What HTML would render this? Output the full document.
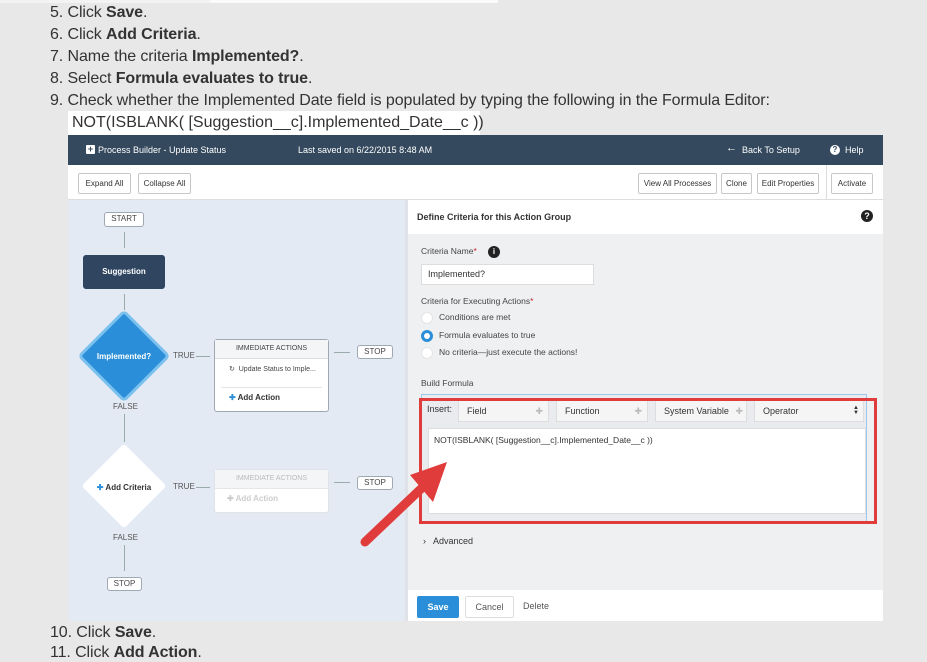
<!DOCTYPE html>
<html><head><meta charset="utf-8"><style>
*{margin:0;padding:0;box-sizing:border-box}
body{width:927px;height:657px;background:#e8e8e8;position:relative;overflow:hidden;font-family:"Liberation Sans Narrow","Liberation Sans",sans-serif;color:#333}
.a{position:absolute}
.li{position:absolute;left:50px;font-size:16px;color:#333;white-space:nowrap;letter-spacing:-0.1px}
.li b{font-weight:bold}
.s{font-family:"Liberation Sans",sans-serif}
.btn{position:absolute;top:173px;height:21px;border:1px solid #c8c8c8;border-radius:2px;background:#fff;font-size:8px;line-height:19px;text-align:center;color:#333;font-family:"Liberation Sans",sans-serif}
.box{position:absolute;border:1.5px solid #a0a8b4;border-radius:3px;background:#fff;font-size:8px;text-align:center;color:#444;font-family:"Liberation Sans",sans-serif}
.lbl{position:absolute;font-size:8px;color:#555;font-family:"Liberation Sans",sans-serif}
.vl{position:absolute;width:1px;background:#9aa}
.hl{position:absolute;height:1px;background:#9aa}
.sel{position:absolute;top:400px;height:22px;background:#f5f5f5;border:1px solid #ddd;font-size:9px;line-height:20px;padding-left:8px;color:#333}
.radio{position:absolute;left:421px;width:12px;height:12px;border-radius:50%;background:#fff;border:1px solid #e4e4e4}
</style></head><body>
<div class="a" style="left:0;top:0;width:210px;height:3px;background:#f3f3f3"></div>
<div class="a" style="left:210px;top:0;width:288px;height:3px;background:#fafafa"></div>

<div class="li" style="top:4px">5. Click <b>Save</b>.</div>
<div class="li" style="top:26px">6. Click <b>Add Criteria</b>.</div>
<div class="li" style="top:48px">7. Name the criteria <b>Implemented?</b>.</div>
<div class="li" style="top:70px">8. Select <b>Formula evaluates to true</b>.</div>
<div class="li" style="top:92px">9. Check whether the Implemented Date field is populated by typing the following in the Formula Editor:</div>
<div class="a" style="left:68px;top:111px;width:412px;height:24px;background:#fff;font-size:16px;line-height:24px;padding-left:4px;white-space:nowrap">NOT(ISBLANK( [Suggestion__c].Implemented_Date__c ))</div>

<div class="a" style="left:68px;top:135px;width:815px;height:30px;background:#34495e"></div>
<div class="a s" style="left:86px;top:145px;width:9px;height:9px;background:#fff;border-radius:1px;color:#34495e;font-size:9px;line-height:9px;text-align:center;font-weight:bold">+</div>
<div class="a s" style="left:98px;top:145px;font-size:9px;color:#fff">Process Builder - Update Status</div>
<div class="a s" style="left:298px;top:145px;font-size:9px;color:#fff">Last saved on 6/22/2015 8:48 AM</div>
<div class="a s" style="left:726px;top:142px;font-size:11px;color:#fff">&#8592;</div>
<div class="a s" style="left:742px;top:145px;font-size:9px;color:#fff">Back To Setup</div>
<div class="a s" style="left:830px;top:145px;width:10px;height:10px;border-radius:50%;background:#fff;color:#34495e;font-size:8px;line-height:10px;text-align:center;font-weight:bold">?</div>
<div class="a s" style="left:845px;top:145px;font-size:9px;color:#fff">Help</div>

<div class="a" style="left:68px;top:165px;width:815px;height:35px;background:#fff;border-bottom:1px solid #ddd"></div>
<div class="btn" style="left:78px;width:53px">Expand All</div>
<div class="btn" style="left:138px;width:53px">Collapse All</div>
<div class="btn" style="left:638px;width:79px">View All Processes</div>
<div class="btn" style="left:721px;width:31px">Clone</div>
<div class="btn" style="left:757px;width:62px">Edit Properties</div>
<div class="a" style="left:826px;top:165px;width:1px;height:35px;background:#ddd"></div>
<div class="btn" style="left:831px;width:42px">Activate</div>

<div class="a" style="left:68px;top:200px;width:340px;height:421px;background:#e4eaf3"></div>
<div class="box" style="left:104px;top:212px;width:40px;height:15px;line-height:12px">START</div>
<div class="vl" style="left:124px;top:232px;height:16px"></div>
<div class="a s" style="left:83px;top:255px;width:82px;height:34px;background:#2f4560;border-radius:3px;color:#fff;font-size:8px;line-height:34px;text-align:center;font-weight:bold">Suggestion</div>
<div class="vl" style="left:124px;top:294px;height:16px"></div>
<div class="a" style="left:91px;top:323px;width:66px;height:66px;background:#2a8fd8;border:3px solid #7cc0ee;transform:rotate(45deg);border-radius:5px"></div>
<div class="a s" style="left:84px;top:352px;width:80px;text-align:center;color:#fff;font-size:8px;font-weight:bold">Implemented?</div>
<div class="lbl" style="left:173px;top:351px">TRUE</div>
<div class="hl" style="left:196px;top:356px;width:14px"></div>
<div class="lbl" style="left:113px;top:402px">FALSE</div>
<div class="vl" style="left:124px;top:414px;height:28px"></div>
<div class="box" style="left:214px;top:339px;width:115px;height:73px">
 <div style="height:19px;line-height:18px;background:#f4f5f7;border-bottom:1px solid #ddd;font-size:7px">IMMEDIATE ACTIONS</div>
 <div style="position:absolute;left:14px;top:25px;font-size:7px">&#x21bb;&nbsp; Update Status to Imple...</div>
 <div style="position:absolute;left:6px;right:6px;top:47px;height:1px;background:#e4e4e4"></div>
 <div style="position:absolute;left:14px;top:53px;font-size:8px;font-weight:bold;color:#333"><span style="color:#2a8fd8">&#10010;</span> Add Action</div>
</div>
<div class="hl" style="left:334px;top:352px;width:16px"></div>
<div class="box" style="left:357px;top:345px;width:36px;height:14px;line-height:11px">STOP</div>

<div class="a" style="left:94px;top:456px;width:60px;height:60px;background:#fff;transform:rotate(45deg);border-radius:3px"></div>
<div class="a s" style="left:84px;top:483px;width:80px;text-align:center;color:#333;font-size:8px;font-weight:bold"><span style="color:#2a8fd8">&#10010;</span> Add Criteria</div>
<div class="lbl" style="left:173px;top:482px">TRUE</div>
<div class="hl" style="left:196px;top:487px;width:14px"></div>
<div class="box" style="left:214px;top:469px;width:115px;height:44px;border-color:#e0e3e8;color:#bbb">
 <div style="height:19px;line-height:18px;background:#f4f5f7;border-bottom:1px solid #e6e6e6;font-size:7px">IMMEDIATE ACTIONS</div>
 <div style="position:absolute;left:12px;top:24px;font-size:8px;font-weight:bold;color:#ccc">&#10010; Add Action</div>
</div>
<div class="hl" style="left:334px;top:482px;width:16px"></div>
<div class="box" style="left:357px;top:476px;width:36px;height:14px;line-height:11px">STOP</div>
<div class="lbl" style="left:113px;top:533px">FALSE</div>
<div class="vl" style="left:124px;top:545px;height:26px"></div>
<div class="box" style="left:107px;top:577px;width:35px;height:14px;line-height:11px">STOP</div>

<div class="a" style="left:405px;top:200px;width:3px;height:421px;background:#dfe3e8"></div>
<div class="a" style="left:408px;top:200px;width:475px;height:34px;background:#fff"></div>
<div class="a s" style="left:417px;top:212px;font-size:9px;font-weight:bold;color:#333">Define Criteria for this Action Group</div>
<div class="a s" style="left:861px;top:210px;width:12px;height:12px;border-radius:50%;background:#222;color:#fff;font-size:9px;line-height:12px;text-align:center;font-weight:bold">?</div>
<div class="a" style="left:408px;top:234px;width:475px;height:356px;background:#eff0f2"></div>
<div class="a s" style="left:421px;top:246px;font-size:8.5px;color:#444">Criteria Name<span style="color:#c23">*</span></div>
<div class="a s" style="left:488px;top:246px;width:12px;height:12px;border-radius:50%;background:#222;color:#fff;font-size:8px;line-height:12px;text-align:center;font-weight:bold">i</div>
<div class="a s" style="left:421px;top:264px;width:173px;height:21px;background:#fff;border:1px solid #ddd;font-size:9px;line-height:19px;padding-left:6px">Implemented?</div>
<div class="a s" style="left:421px;top:296px;font-size:8.5px;color:#444">Criteria for Executing Actions<span style="color:#c23">*</span></div>
<div class="radio" style="top:312px"></div>
<div class="a s" style="left:439px;top:312px;font-size:8.5px;color:#444">Conditions are met</div>
<div class="radio" style="top:330px;background:#fff;border:3px solid #2a8fd8"></div>
<div class="a s" style="left:439px;top:330px;font-size:8.5px;color:#444">Formula evaluates to true</div>
<div class="radio" style="top:347px"></div>
<div class="a s" style="left:439px;top:347px;font-size:8.5px;color:#444">No criteria—just execute the actions!</div>
<div class="a s" style="left:421px;top:378px;font-size:8.5px;color:#444">Build Formula</div>
<div class="a" style="left:421px;top:394px;width:446px;height:128px;background:#e9ebee;border:1px solid #9cc6ea"></div>
<div class="a s" style="left:427px;top:404px;font-size:9px;color:#333">Insert:</div>
<div class="sel s" style="left:458px;width:91px">Field<span style="position:absolute;right:5px;color:#bbb">&#10010;</span></div>
<div class="sel s" style="left:556px;width:92px">Function<span style="position:absolute;right:5px;color:#bbb">&#10010;</span></div>
<div class="sel s" style="left:655px;width:92px">System Variable<span style="position:absolute;right:3px;color:#bbb">&#10010;</span></div>
<div class="sel s" style="left:754px;width:110px">Operator<span style="position:absolute;right:4px;top:0;font-size:6px;line-height:5px;padding-top:5px">&#9650;<br>&#9660;</span></div>
<div class="a s" style="left:428px;top:428px;width:438px;height:86px;background:#fff;border:1px solid #ddd;font-size:8.5px;padding:6px 5px">NOT(ISBLANK( [Suggestion__c].Implemented_Date__c ))</div>
<div class="a" style="left:419px;top:398px;width:458px;height:126px;border:3px solid #e03c3c"></div>
<svg class="a" style="left:355px;top:455px" width="100" height="95" viewBox="0 0 100 95">
<line x1="10" y1="87" x2="70" y2="30" stroke="#e03c3c" stroke-width="9" stroke-linecap="round"/>
<polygon points="92,7 55,20 78,47" fill="#e03c3c"/>
</svg>
<div class="a s" style="left:423px;top:536px;font-size:9px;color:#333">&#8250;&nbsp;&nbsp; Advanced</div>
<div class="a" style="left:408px;top:590px;width:475px;height:31px;background:#fff"></div>
<div class="a s" style="left:417px;top:596px;width:42px;height:22px;background:#2a8fd8;border-radius:2px;color:#fff;font-size:9px;line-height:22px;text-align:center;font-weight:bold">Save</div>
<div class="a s" style="left:465px;top:596px;width:49px;height:22px;border:1px solid #ddd;border-radius:2px;background:#fff;color:#555;font-size:9px;line-height:20px;text-align:center">Cancel</div>
<div class="a s" style="left:523px;top:601px;font-size:9px;color:#555">Delete</div>

<div class="li" style="top:624px">10. Click <b>Save</b>.</div>
<div class="li" style="top:644px">11. Click <b>Add Action</b>.</div>
</body></html>
